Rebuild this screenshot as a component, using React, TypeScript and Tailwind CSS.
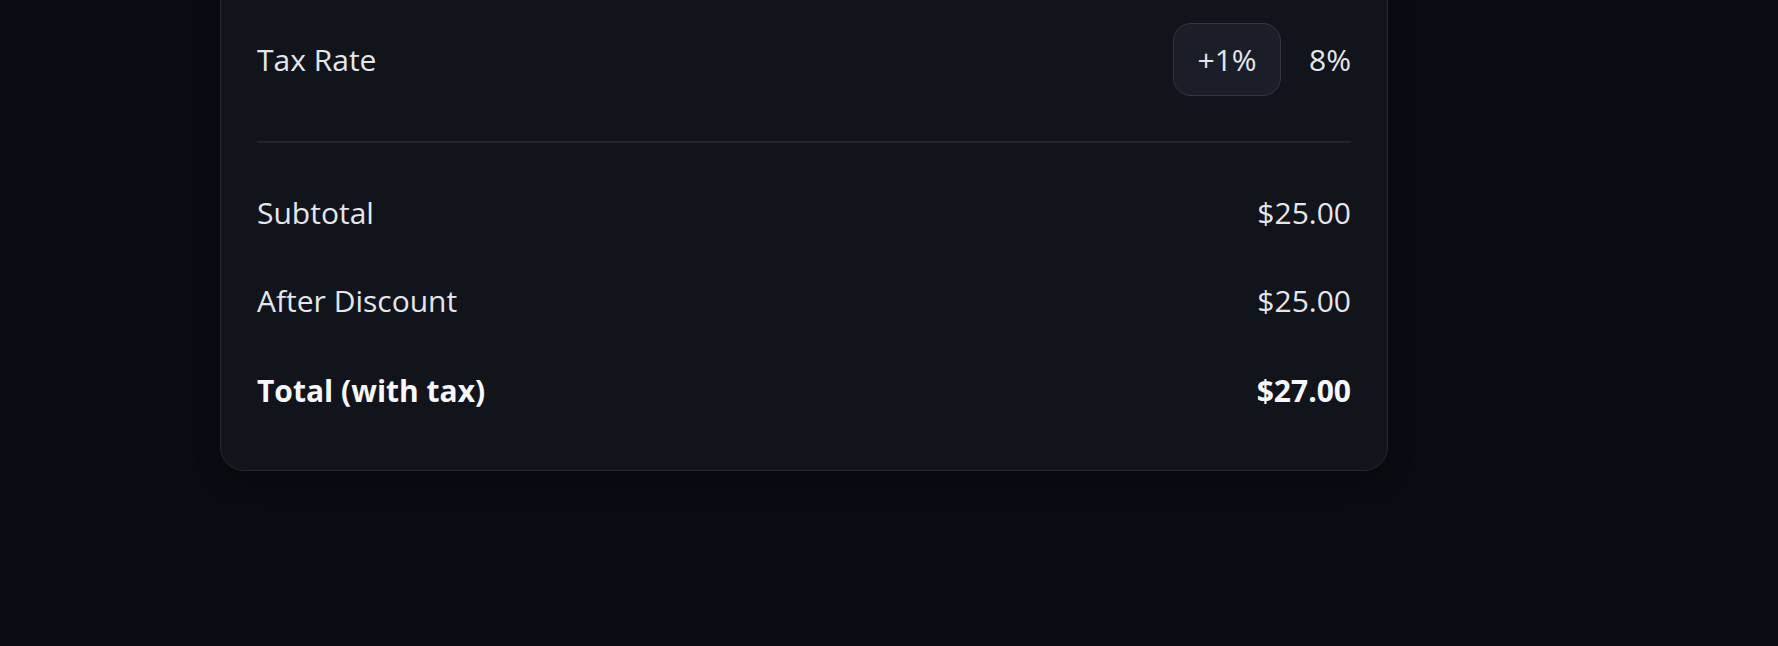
import React from "react";

const rows = [
  { label: "Subtotal", value: "$25.00" },
  { label: "After Discount", value: "$25.00" },
];

export default function App() {
  return (
    <div
      className="w-[1778px] h-[646px] overflow-hidden bg-[#0a0c13] text-[#e3e7ed]"
      style={{ fontFamily: '"Open Sans", "Noto Sans", sans-serif' }}
    >
      <div className="ml-[220px] w-[1168px] -mt-[40px] pt-[62px] pb-[57px] px-[36px] rounded-[24px] border-[1.5px] border-[#252831] bg-[#12141b] shadow-[0_10px_24px_rgba(0,0,0,0.25)]">
        {/* Tax rate */}
        <div className="flex items-center justify-between">
          <span className="text-[30px] leading-[45px]">Tax Rate</span>
          <div className="flex items-center gap-[28px]">
            <button className="h-[73px] w-[108px] rounded-[18px] border-[1.5px] border-[#33363f] bg-[#1b1e26] text-[30px] leading-[45px] text-[#e3e7ed] flex items-center justify-center">
              +1%
            </button>
            <span className="text-[30px] leading-[45px]">8%</span>
          </div>
        </div>

        <div className="mt-[45px] h-[2px] bg-[#22252d]" />

        {/* Totals */}
        <div className="mt-[47px] flex flex-col gap-[43px]">
          {rows.map((r) => (
            <div key={r.label} className="flex items-center justify-between text-[30px] leading-[45px]">
              <span>{r.label}</span>
              <span>{r.value}</span>
            </div>
          ))}
          <div className="flex items-center justify-between text-[30px] leading-[45px] font-bold text-[#f6f8fb] mt-[2px]">
            <span>Total (with tax)</span>
            <span>$27.00</span>
          </div>
        </div>
      </div>
    </div>
  );
}
